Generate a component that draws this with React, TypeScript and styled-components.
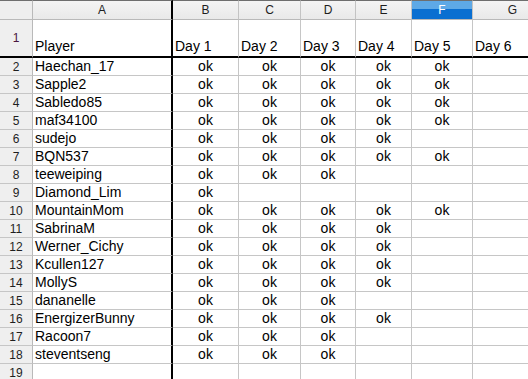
import React from 'react'
import styled, { createGlobalStyle, css } from 'styled-components'

const GlobalStyle = createGlobalStyle`
  html, body {
    margin: 0;
    padding: 0;
    background: #ffffff;
    font-family: "Liberation Sans", Arial, sans-serif;
  }
`

const Viewport = styled.div`
  width: 528px;
  height: 379px;
  overflow: hidden;
  background: #fff;
`

const Sheet = styled.div`
  display: grid;
  grid-template-columns: 33px 140px 66px 62px 55px 56px 61px 80px;
  grid-template-rows: 20px 38px repeat(18, 18px);
  width: 553px;
`

const Corner = styled.div`
  box-sizing: border-box;
  background: #eeeeee;
  border-top: 1px solid #6e6e6e;
  border-right: 1px solid #b9b9b9;
  border-bottom: 1px solid #b9b9b9;
`

const ColHeader = styled.div<{ $selected?: boolean; $thick?: boolean }>`
  box-sizing: border-box;
  display: flex;
  align-items: center;
  justify-content: center;
  font-size: 12px;
  color: #1e1e1e;
  background: linear-gradient(#f4f4f4, #e9e9e9);
  border-top: 1px solid #6e6e6e;
  border-right: 1px solid #c3c3c3;
  border-bottom: 1px solid #b9b9b9;
  ${({ $thick }) => $thick && css`border-right: 2px solid #000;`}
  ${({ $selected }) =>
    $selected &&
    css`
      color: #ffffff;
      background: linear-gradient(#5ea9e6 0, #5ea9e6 42%, #0a6fd1 42%, #0a6fd1 100%);
    `}
`

const RowHeader = styled.div<{ $thick?: boolean }>`
  box-sizing: border-box;
  display: flex;
  align-items: center;
  justify-content: center;
  font-size: 12px;
  color: #1e1e1e;
  background: #efefef;
  border-right: 1px solid #b9b9b9;
  border-bottom: 1px solid #c6c6c6;
  ${({ $thick }) => $thick && css`border-bottom: 2px solid #000; color: #4a1540;`}
`

const Cell = styled.div<{ $name?: boolean; $top?: boolean }>`
  box-sizing: border-box;
  display: flex;
  align-items: ${({ $top }) => ($top ? 'flex-end' : 'center')};
  justify-content: ${({ $name, $top }) => ($name || $top ? 'flex-start' : 'center')};
  padding: ${({ $top }) => ($top ? '0 0 1px 2px' : '0 2px 0 2px')};
  font-size: 14px;
  line-height: 17px;
  color: #000;
  white-space: nowrap;
  overflow: hidden;
  border-right: ${({ $name }) => ($name ? '2px solid #000' : '1px solid #c6c6c6')};
  border-bottom: ${({ $top }) => ($top ? '2px solid #000' : '1px solid #c6c6c6')};
`

const columns = ['A', 'B', 'C', 'D', 'E', 'F', 'G']
const headings = ['Player', 'Day 1', 'Day 2', 'Day 3', 'Day 4', 'Day 5', 'Day 6']

const players: [string, number][] = [
  ['Haechan_17', 5],
  ['Sapple2', 5],
  ['Sabledo85', 5],
  ['maf34100', 5],
  ['sudejo', 4],
  ['BQN537', 5],
  ['teeweiping', 3],
  ['Diamond_Lim', 1],
  ['MountainMom', 5],
  ['SabrinaM', 4],
  ['Werner_Cichy', 4],
  ['Kcullen127', 4],
  ['MollyS', 4],
  ['dananelle', 3],
  ['EnergizerBunny', 4],
  ['Racoon7', 3],
  ['steventseng', 3],
  ['', 0],
]

const App = () => {
  return (
    <Viewport>
      <GlobalStyle />
      <Sheet>
        <Corner />
        {columns.map((c) => (
          <ColHeader key={c} $selected={c === 'F'} $thick={c === 'A'}>
            {c}
          </ColHeader>
        ))}

        <RowHeader $thick>1</RowHeader>
        {headings.map((h, i) => (
          <Cell key={h} $top $name={i === 0}>
            {h}
          </Cell>
        ))}

        {players.map(([name, days], r) => (
          <React.Fragment key={r}>
            <RowHeader>{r + 2}</RowHeader>
            <Cell $name>{name}</Cell>
            {[1, 2, 3, 4, 5, 6].map((d) => (
              <Cell key={d}>{d <= days ? 'ok' : ''}</Cell>
            ))}
          </React.Fragment>
        ))}
      </Sheet>
    </Viewport>
  )
}

export default App
